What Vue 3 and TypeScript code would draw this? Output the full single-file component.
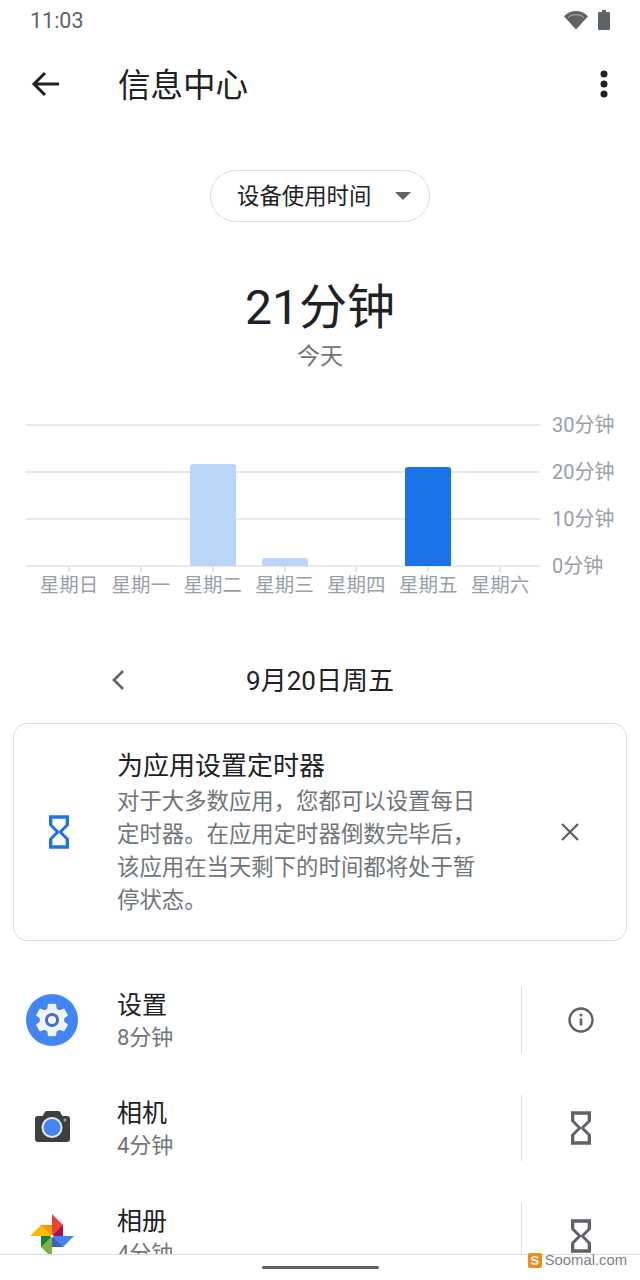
<template>
  <div class="screen">
    <div class="status-bar">
      <span class="time">11:03</span>
      <div class="status-icons">
        <svg width="26" height="20" viewBox="0 0 26 20">
          <path d="M13 19.500 1 6.200C4.200 3 8.400 1 13 1s8.800 2 12 5.200z" fill="#5f6368" />
          <path d="M5.100 7.400C7.200 5.700 10 4.700 13 4.700s5.800 1 7.900 2.700" fill="none" stroke="#fff" stroke-width="1" opacity="0.5" />
        </svg>
        <svg width="12" height="20" viewBox="0 0 12 20">
          <path d="M4 0h4v2h3a1 1 0 0 1 1 1v16a1 1 0 0 1-1 1H1a1 1 0 0 1-1-1V3a1 1 0 0 1 1-1h3z" fill="#5f6368" />
        </svg>
      </div>
    </div>

    <div class="toolbar">
      <svg class="back" width="32" height="32" viewBox="0 0 32 32">
        <path d="M29 16H5M15 5 4 16l11 11" fill="none" stroke="#202124" stroke-width="3" />
      </svg>
      <span class="page-title">信息中心</span>
      <svg class="more" width="10" height="30" viewBox="0 0 10 30">
        <circle cx="5" cy="5" r="3.500" fill="#202124" />
        <circle cx="5" cy="15" r="3.500" fill="#202124" />
        <circle cx="5" cy="25" r="3.500" fill="#202124" />
      </svg>
    </div>

    <div class="pill-row">
      <div class="pill">
        <span class="pill-text">设备使用时间</span>
        <i class="caret"></i>
      </div>
    </div>

    <div class="total">21分钟</div>
    <div class="total-label">今天</div>

    <div class="chart">
      <div class="plot">
        <div v-for="label in scale" :key="label" class="grid-row">
          <div class="grid-line"></div>
          <span class="scale-label">{{ label }}</span>
        </div>
        <div class="columns">
          <div v-for="day in days" :key="day.name" class="column">
            <div
              v-if="day.height"
              class="bar"
              :class="{ active: day.active }"
              :style="{ height: day.height + 'px' }"
            ></div>
          </div>
        </div>
      </div>
      <div class="day-row">
        <div v-for="day in days" :key="day.name" class="day">
          <i class="tick"></i>
          <span class="day-name">{{ day.name }}</span>
        </div>
      </div>
    </div>

    <div class="date-row">
      <svg class="prev" width="16" height="24" viewBox="0 0 16 24">
        <path d="M13 3 4 12l9 9" fill="none" stroke="#5f6368" stroke-width="2.600" />
      </svg>
      <span class="date-text">9月20日周五</span>
    </div>

    <div class="card">
      <svg class="card-icon" width="40" height="40" viewBox="0 0 24 24">
        <path :d="hourglass" fill="#1a73e8" />
      </svg>
      <div class="card-text">
        <div class="card-title">为应用设置定时器</div>
        <div class="card-body">对于大多数应用，您都可以设置每日定时器。在应用定时器倒数完毕后，该应用在当天剩下的时间都将处于暂停状态。</div>
      </div>
      <svg class="close" width="20" height="20" viewBox="0 0 20 20">
        <path d="M2 2l16 16M18 2 2 18" fill="none" stroke="#5f6368" stroke-width="2.400" />
      </svg>
    </div>

    <div class="apps">
      <div v-for="app in apps" :key="app.name" class="app-row">
        <div class="app-icon">
          <svg v-if="app.icon === 'settings'" width="52" height="52" viewBox="0 0 52 52">
            <circle cx="26" cy="26" r="26" fill="#4285f4" />
            <g transform="translate(5.600 5.600) scale(1.700)">
              <path :d="gear" fill="#f1f3f4" />
            </g>
            <circle cx="26" cy="26" r="5.500" fill="#f8f9fa" stroke="#3f6fd0" stroke-width="3" />
          </svg>
          <svg v-else-if="app.icon === 'camera'" width="52" height="52" viewBox="0 0 52 52">
            <path d="M21 9h11c1 0 1.600.4 2.200 1.200L36.500 14H41a3 3 0 0 1 3 3v20a3 3 0 0 1-3 3H12a3 3 0 0 1-3-3V17a3 3 0 0 1 3-3h4.500l2.300-3.800C19.400 9.400 20 9 21 9z" fill="#3c4043" />
            <circle cx="26" cy="25.500" r="10.500" fill="#e8eaed" />
            <circle cx="26" cy="25.500" r="8.500" fill="#4285f4" />
            <circle cx="39" cy="18" r="1.500" fill="#9aa0a6" />
          </svg>
          <svg v-else width="52" height="52" viewBox="0 0 52 52">
            <path d="M4 26 15 15h11v11z" fill="#fbbc04" />
            <path d="M15 15h11v11z" fill="#f29900" />
            <path d="M26 4l11 11v11H26z" fill="#ea4335" />
            <path d="M37 15v11H26z" fill="#a50e5e" />
            <path d="M48 26 37 37H26V26z" fill="#4285f4" />
            <path d="M37 37H26V26z" fill="#3b5fc4" />
            <path d="M26 48 15 37V26h11z" fill="#7cb342" />
            <path d="M15 37V26h11z" fill="#188038" />
            <circle cx="26" cy="26" r="1.500" fill="#fff" />
          </svg>
        </div>
        <div class="app-text">
          <div class="app-name">{{ app.name }}</div>
          <div class="app-time">{{ app.time }}</div>
        </div>
        <div class="app-action">
          <svg v-if="app.icon === 'settings'" width="28" height="28" viewBox="0 0 28 28">
            <circle cx="14" cy="14" r="11.500" fill="none" stroke="#5f6368" stroke-width="2.400" />
            <path d="M14 12.500v7" stroke="#5f6368" stroke-width="2.600" />
            <circle cx="14" cy="9" r="1.500" fill="#5f6368" />
          </svg>
          <svg v-else width="40" height="40" viewBox="0 0 24 24">
            <path :d="hourglass" fill="#5f6368" />
          </svg>
        </div>
      </div>
    </div>

    <div class="nav-bar">
      <i class="home-pill"></i>
      <div class="watermark">
        <b class="mark">S</b>
        <span>Soomal.com</span>
      </div>
    </div>
  </div>
</template>

<script setup lang="ts">
const scale = ["30分钟", "20分钟", "10分钟", "0分钟"];

const days = [
  { name: "星期日", height: 0, active: false },
  { name: "星期一", height: 0, active: false },
  { name: "星期二", height: 102, active: false },
  { name: "星期三", height: 8, active: false },
  { name: "星期四", height: 0, active: false },
  { name: "星期五", height: 99, active: true },
  { name: "星期六", height: 0, active: false },
];

const apps = [
  { name: "设置", time: "8分钟", icon: "settings" },
  { name: "相机", time: "4分钟", icon: "camera" },
  { name: "相册", time: "4分钟", icon: "photos" },
];

const hourglass =
  "M6 2v6h.01L6 8.010 10 12l-4 4 .01.01H6V22h12v-5.990h-.01L18 16l-4-4 4-3.990-.01-.01H18V2H6zm10 14.500V20H8v-3.500l4-4 4 4zm-4-5l-4-4V4h8v3.500l-4 4z";

const gear =
  "M19.140 12.940c.04-.3.06-.61.06-.94 0-.32-.02-.64-.07-.94l2.030-1.580c.18-.14.23-.41.12-.61l-1.920-3.320c-.12-.22-.37-.29-.59-.22l-2.390.96c-.5-.38-1.030-.7-1.620-.94l-.36-2.540c-.04-.24-.24-.41-.48-.41h-3.840c-.24 0-.43.17-.47.41l-.36 2.540c-.59.24-1.130.57-1.620.94l-2.390-.96c-.22-.08-.47 0-.59.22L2.740 8.870c-.12.21-.08.47.12.61l2.030 1.580c-.05.3-.09.63-.09.94s.02.64.07.94l-2.030 1.580c-.18.14-.23.41-.12.61l1.920 3.320c.12.22.37.29.59.22l2.390-.96c.5.38 1.030.7 1.620.94l.36 2.540c.05.24.24.41.48.41h3.840c.24 0 .44-.17.47-.41l.36-2.540c.59-.24 1.130-.56 1.620-.94l2.390.96c.22.08.47 0 .59-.22l1.920-3.320c.12-.22.07-.47-.12-.61l-2.010-1.580z";
</script>

<style scoped>
.screen {
  position: relative;
  width: 640px;
  height: 1280px;
  overflow: hidden;
  background: #fff;
  color: #202124;
  font-family: Roboto, "Noto Sans CJK SC", sans-serif;
}

.status-bar {
  display: flex;
  align-items: center;
  justify-content: space-between;
  height: 40px;
  padding: 0 30px;
}

.time {
  font-size: 21.5px;
  color: #5f6368;
}

.status-icons {
  display: flex;
  align-items: center;
  gap: 9px;
}

.toolbar {
  display: flex;
  align-items: center;
  height: 88px;
  padding-left: 30px;
  padding-right: 31px;
}

.back {
  flex: none;
}

.page-title {
  flex: 1;
  margin-left: 56px;
  margin-bottom: 4px;
  font-size: 32.5px;
}

.pill-row {
  display: flex;
  justify-content: center;
  margin-top: 42px;
}

.pill {
  display: flex;
  align-items: center;
  box-sizing: border-box;
  width: 220px;
  height: 52px;
  padding-left: 26px;
  border: 1.5px solid #dadce0;
  border-radius: 26px;
  font-size: 22.4px;
}

.pill-text {
  margin-bottom: 5px;
}

.caret {
  margin-left: 24px;
  border-left: 8.500px solid transparent;
  border-right: 8.500px solid transparent;
  border-top: 8px solid #5f6368;
}

.total {
  margin-top: 54px;
  height: 64px;
  font-size: 48px;
  line-height: 64px;
  text-align: center;
}

.total-label {
  margin-top: 1px;
  height: 32px;
  font-size: 23px;
  line-height: 32px;
  text-align: center;
  color: #70757a;
}

.chart {
  margin-top: 51px;
  padding-left: 26px;
}

.plot {
  position: relative;
  height: 142px;
}

.grid-row {
  display: flex;
  align-items: center;
  height: 2px;
  margin-bottom: 45px;
}

.grid-row:last-of-type {
  margin-bottom: 0;
}

.grid-line {
  width: 514px;
  height: 1.5px;
  background: #e8e9eb;
}

.scale-label {
  margin-left: 12px;
  margin-bottom: 4px;
  font-size: 20px;
  white-space: nowrap;
  color: #9aa0a6;
}

.columns {
  position: absolute;
  left: 7px;
  top: 0;
  bottom: 0;
  display: flex;
  width: 503px;
}

.column {
  display: flex;
  flex: 1;
  align-items: flex-end;
  justify-content: center;
}

.bar {
  width: 46px;
  border-radius: 3px 3px 0 0;
  background: #bbd5f8;
}

.bar.active {
  background: #1a73e8;
}

.day-row {
  display: flex;
  width: 503px;
  margin-left: 7px;
}

.day {
  display: flex;
  flex: 1;
  flex-direction: column;
  align-items: center;
  font-size: 19.5px;
  white-space: nowrap;
  color: #9aa0a6;
}

.tick {
  width: 2px;
  height: 6px;
  background: #e3e4e6;
}

.day-name {
  margin-top: -3px;
}

.date-row {
  position: relative;
  display: flex;
  justify-content: center;
  align-items: center;
  height: 40px;
  margin-top: 62px;
  font-size: 26px;
}

.date-text {
  margin-bottom: 3px;
}

.prev {
  position: absolute;
  left: 110px;
}

.card {
  display: flex;
  align-items: center;
  box-sizing: border-box;
  height: 218px;
  margin: 23px 13px 0;
  padding-left: 25px;
  border: 1.5px solid #dadce0;
  border-radius: 14px;
}

.card-icon {
  flex: none;
}

.card-text {
  width: 362px;
  margin-left: 38px;
}

.card-title {
  font-size: 26px;
  line-height: 37px;
}

.card-body {
  font-size: 22.4px;
  line-height: 33px;
  color: #70757a;
}

.close {
  flex: none;
  margin-left: 81px;
}

.apps {
  margin-top: 46px;
}

.app-row {
  display: flex;
  align-items: center;
  height: 66px;
  margin-bottom: 42px;
}

.app-icon {
  flex: none;
  width: 52px;
  height: 52px;
  margin-left: 26px;
}

.app-text {
  flex: 1;
  margin-left: 39px;
  padding-top: 2px;
}

.app-name {
  font-size: 25px;
  line-height: 34px;
}

.app-time {
  font-size: 22px;
  line-height: 30px;
  color: #70757a;
}

.app-action {
  display: flex;
  flex: none;
  align-items: center;
  justify-content: center;
  box-sizing: border-box;
  width: 119px;
  height: 66px;
  border-left: 1.5px solid #dadce0;
}

.nav-bar {
  position: absolute;
  left: 0;
  right: 0;
  bottom: 0;
  display: flex;
  justify-content: center;
  box-sizing: border-box;
  height: 26px;
  padding-top: 11px;
  border-top: 1.5px solid #dadce0;
  background: #fff;
}

.home-pill {
  width: 117px;
  height: 3px;
  border-radius: 2px;
  background: #5f6368;
}

.watermark {
  position: absolute;
  right: 13px;
  top: -3px;
  display: flex;
  align-items: center;
  gap: 3px;
  font-family: "Liberation Sans", sans-serif;
  font-size: 14.8px;
  color: #808080;
}

.mark {
  width: 14px;
  height: 15px;
  border-radius: 2px;
  background: #f28a1e;
  color: #fff;
  font-size: 13px;
  line-height: 15px;
  text-align: center;
}
</style>
